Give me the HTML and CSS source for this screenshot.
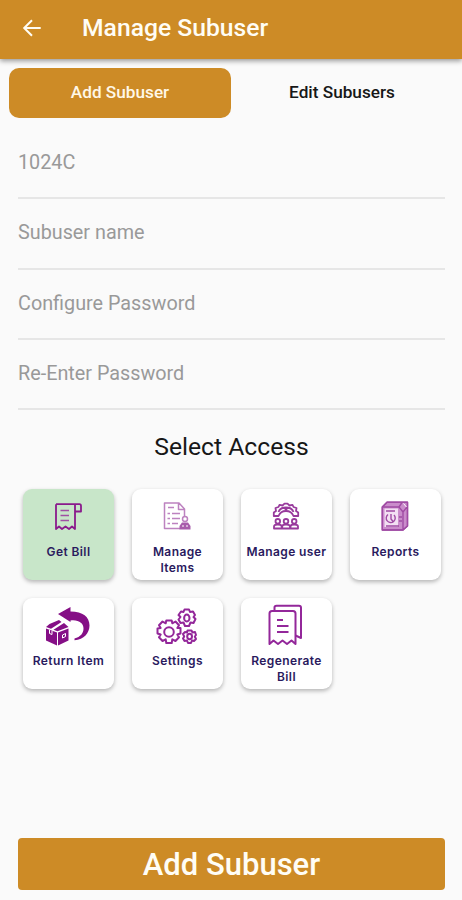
FILE: index.html
```html
<!DOCTYPE html>
<html lang="en">
<head>
    <meta charset="UTF-8">
    <meta name="viewport" content="width=device-width, initial-scale=1.0">
    <title>Manage Subuser</title>
    <link rel="stylesheet" href="styles.css">
</head>
<body>
    <header class="app-bar">
        <svg class="back-icon" viewBox="0 0 24 24"><path d="M21.500 12H4M12 3.500L3.500 12L12 20.500"/></svg>
        <h1>Manage Subuser</h1>
    </header>

    <nav class="tabs">
        <div class="tab active">Add Subuser</div>
        <div class="tab">Edit Subusers</div>
    </nav>

    <main class="content">
        <div class="field">1024C</div>
        <div class="field">Subuser name</div>
        <div class="field">Configure Password</div>
        <div class="field">Re-Enter Password</div>

        <h2>Select Access</h2>

        <div class="access-grid">
            <div class="card selected">
                <svg class="icon" viewBox="0 0 49 49">
                    <path d="M12 11.200H35.500Q37 11.200 37 13V18.500H31M31 18.500V12M12 11.200V36L15 33.500L18 36L21.500 33.500L25 36L28 33.500L31 36V18"/>
                    <path class="thin" d="M16.500 17.500H25M16.500 22.500H25M16.500 27.500H25"/>
                </svg>
                <span>Get Bill</span>
            </div>

            <div class="card">
                <svg class="icon light" viewBox="0 0 49 49">
                    <path d="M27 35.500H11.500V10H26L31.500 16V24M25.500 10V16.500H31.500"/>
                    <path d="M15 14.500H21M14.500 20.500H17M19 20.500H27M14.500 25.500H17M19 25.500H27M14.500 30.500H17M19 30.500H25"/>
                    <circle cx="32" cy="26" r="2.500"/>
                    <path class="solid" d="M26.500 36.500V33L29 29.500H35L37.500 33V36.500Z"/>
                    <path class="cut" d="M29 33H31M33 33H35"/>
                </svg>
                <span>Manage<br>Items</span>
            </div>

            <div class="card">
                <svg class="icon medium" viewBox="0 0 49 49">
                    <path d="M11.800 23V19.500L14 18L13.500 15L16.500 14L17.500 11.800L20.500 12.500L22.500 10.700H25.500L27.500 12.500L30.500 11.800L31.500 14L34.500 15L34 18L36.200 19.500V23H31.500Q29.500 18 24 18T16.500 23Z"/>
                    <path d="M16.500 19Q18 14.500 24 14.500T31.500 19M22 14.500L24 16.500L26 14.500"/>
                    <circle cx="15.800" cy="28.300" r="2.300"/><circle cx="24" cy="28.300" r="2.300"/><circle cx="32.200" cy="28.300" r="2.300"/>
                    <path d="M12 35.500V33.500Q12 31.500 15.800 31.500T19.700 33.500V35.500ZM20.200 35.500V33.500Q20.200 31.500 24 31.500T28 33.500V35.500ZM28.500 35.500V33.500Q28.500 31.500 32.200 31.500T36 33.500V35.500Z"/>
                </svg>
                <span>Manage user</span>
            </div>

            <div class="card">
                <svg class="icon report" viewBox="0 0 49 49">
                    <path class="tint" d="M11.300 14L16 9.300H36.500V33L32 37H11.300Z"/>
                    <path class="paper" d="M13.500 15.500H27V34H13.500Z"/>
                    <path d="M11.300 14L16 9.300H36.500V33L32 37H11.300ZM11.300 14H28L32 19V37M28 14L31 9.500M32 19L36 14"/>
                    <path d="M15 18H24M17 21.500A4.500 4.500 0 1 0 23 22M20 21V26L22.500 29M15 33H28M28 24H31M28 28H31"/>
                    <path class="cut" d="M32.500 10.500L35.500 14"/>
                </svg>
                <span>Reports</span>
            </div>

            <div class="card">
                <svg class="icon" viewBox="0 0 49 49">
                    <path class="solid" d="M14 12L26.500 5V9.500C39 9.500 45.500 15 45.500 23.500C45.500 31 40 37.500 30.500 38.300V36.500C36.500 35 39.500 31 39.500 26.500C39.500 21.500 35 17.500 26.500 18.500V20Z"/>
                    <path class="solid" d="M2 26.500L13 30.500V43.500L2 38.500ZM14 30.500L24.500 26.500V38.500L14 43.500ZM2 25L5.500 22L15 18L17.500 20L7 26.800ZM9.500 27.800L20 21L24.500 25L13.500 29.300Z"/>
                    <path class="cut" d="M5.500 28V31.500L8 32.500V29M18.500 33L21.500 31.500V34.500L18.500 36Z"/>
                </svg>
                <span>Return Item</span>
            </div>

            <div class="card">
                <svg class="icon gears" viewBox="0 0 49 49">
                    <path d="M13.300 18.500H18.700L19.300 21.300L22.500 19.500L26 23.300L24.300 26H27.500V31.500L24.300 32.500L26 35.300L22.500 39L19.300 37.300L18.700 41H13.300L12.700 37.300L9.500 39L6 35.300L7.700 32.500L4.500 31.500V26.500L7.700 26L6 23.300L9.500 19.500L12.700 21.300Z"/>
                    <circle cx="16" cy="30" r="4.800"/>
                    <path d="M31.500 7.500H36L37 10L40 9.500L42 13L40.500 15L42.500 17L40.500 21L37.500 20.500L36 24H32L30.500 20.500L27.500 21L25.500 17.500L27.500 15L25.500 13L28 9.500L30.500 10Z"/>
                    <ellipse cx="33.800" cy="16" rx="2.700" ry="3.500"/>
                    <path d="M34.500 28.500H38.500L39.500 30.500L42 30L43 33L41.800 34.500L43 37L41 39L39 38.500L38 41H35L34 38.500L31.500 39L30 36.500L31.200 34.500L30 32L32 30L34 30.500Z"/>
                    <ellipse cx="36.600" cy="34.500" rx="2.400" ry="2.700"/>
                </svg>
                <span>Settings</span>
            </div>

            <div class="card">
                <svg class="icon gears" viewBox="0 0 49 49">
                    <path d="M12.500 8V5.500Q12.500 3.800 14.500 3.800H37Q39 3.800 39 5.800V36L33.500 33.500"/>
                    <path d="M7.500 42V11.500Q7.500 9 10 9H31Q33.500 9 33.500 11.500V42L29.500 38.500L25 42L20.500 38.500L16 42L11.500 38.500Z"/>
                    <path d="M15 18H21M15 24H26.500M15 30H26.500"/>
                </svg>
                <span>Regenerate<br>Bill</span>
            </div>
        </div>

        <button class="submit-btn">Add Subuser</button>
    </main>
</body>
</html>
```
FILE: styles.css
```css
* {
    margin: 0;
    padding: 0;
    box-sizing: border-box;
}

body {
    display: flex;
    flex-direction: column;
    height: 900px;
    background: #fafafa;
    color: #171717;
    font-family: Roboto, sans-serif;
    overflow: hidden;
}

.app-bar {
    display: flex;
    align-items: center;
    gap: 39px;
    height: 59px;
    padding: 0 21px 4px;
    background: #cd8b26;
    color: #fffdf5;
    box-shadow: 0 2px 5px rgba(0, 0, 0, 0.4);
}

.back-icon {
    width: 22px;
    height: 22px;
    fill: none;
    stroke: #fffdf5;
    stroke-width: 2.2;
}

.app-bar h1 {
    font-size: 24.700px;
    font-weight: 500;
}

/* tabs */
.tabs {
    display: flex;
    padding: 9px 9px 0;
}

.tab {
    width: 222px;
    height: 50px;
    border-radius: 10px;
    font-size: 17.200px;
    font-weight: 500;
    line-height: 48px;
    text-align: center;
}

.tab.active {
    background: #cd8b26;
    color: #fff8e8;
}

.content {
    flex: 1;
    display: flex;
    flex-direction: column;
    padding: 11px 17px 10px 18px;
}

/* form fields */
.field {
    height: 70.3px;
    padding-top: 22px;
    border-bottom: 2px solid #e6e6e6;
    color: #999;
    font-size: 19.800px;
    line-height: 24px;
}

.content h2 {
    margin-top: 21px;
    font-size: 24.700px;
    font-weight: 400;
    line-height: 32px;
    text-align: center;
}

/* access cards */
.access-grid {
    display: grid;
    grid-template-columns: repeat(4, 91px);
    gap: 18px;
    margin: 26px 0 0 5px;
}

.card {
    display: flex;
    flex-direction: column;
    align-items: center;
    height: 91px;
    padding-top: 4px;
    border-radius: 9px;
    background: #fff;
    box-shadow: 0 2px 4px rgba(0, 0, 0, 0.28);
}

.card.selected {
    background: #c8e6c9;
}

.card span {
    margin-top: 2px;
    color: #2a1a5e;
    font-family: Inter, sans-serif;
    font-size: 12px;
    font-weight: 600;
    letter-spacing: 0.4px;
    line-height: 16px;
    text-align: center;
    white-space: nowrap;
}

.icon {
    flex: none;
    width: 49px;
    height: 49px;
    fill: none;
    stroke: #8a1a8c;
    stroke-width: 1.8;
    stroke-linejoin: round;
}

.icon.light {
    stroke: #bd82c0;
    stroke-width: 1.5;
}

.icon.medium {
    stroke: #983a9c;
    stroke-width: 1.8;
}

.icon.report {
    stroke: #a04ba4;
    stroke-width: 1.4;
}

.icon.gears {
    stroke: #93279a;
    stroke-width: 2;
}

.icon .thin {
    stroke: #a04fa3;
    stroke-width: 1.5;
}

.icon .solid {
    fill: #850f86;
    stroke: none;
}

.icon.light .solid {
    fill: #a85cab;
}

.icon .tint {
    fill: #ca8ccb;
}

.icon .paper {
    fill: #f3e0f3;
    stroke: none;
}

.icon .cut {
    stroke: #fff;
    stroke-width: 1;
}

.submit-btn {
    height: 52px;
    margin-top: auto;
    border: none;
    border-radius: 4px;
    background: #cd8b26;
    color: #fffdf5;
    font-family: inherit;
    font-size: 31px;
    font-weight: 500;
}
```
